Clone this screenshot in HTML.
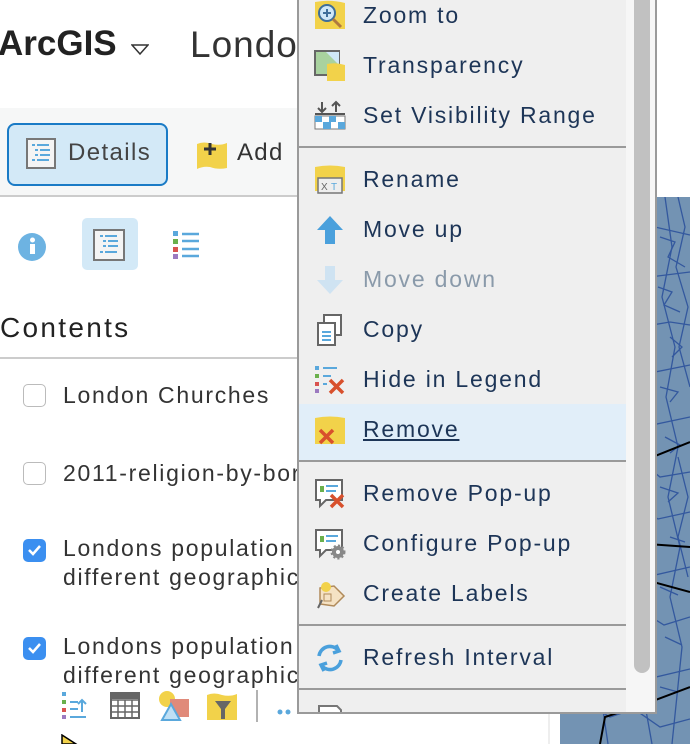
<!DOCTYPE html>
<html><head><meta charset="utf-8"><style>
*{margin:0;padding:0;box-sizing:border-box}
body{width:690px;height:744px;overflow:hidden;background:#fff;font-family:"Liberation Sans",sans-serif;position:relative;color:#333}
.abs{position:absolute}
.mi{position:absolute;left:363px;font-size:23px;color:#1d3557;white-space:nowrap;letter-spacing:1.8px}
.ic{position:absolute;left:314px;width:32px;height:32px}
.sep{position:absolute;left:299px;width:327px;height:2px;background:#9a9a9a}
.cb{position:absolute;left:23px;width:23px;height:23px;border:1.5px solid #bbb;border-radius:5px;background:#fff}
.cb.on{background:#3b8ff0;border-color:#3b8ff0}
.lt{position:absolute;left:63px;font-size:23px;color:#333;white-space:nowrap;line-height:29px;letter-spacing:1.7px}
</style></head><body>
<!-- header -->
<div class="abs" style="left:-2px;top:24px;font-size:35px;color:#222;font-weight:bold;letter-spacing:0px">ArcGIS</div>
<svg class="abs" style="left:131px;top:44px" width="18" height="12"><path d="M1 1 L17 1 L9 10 Z" fill="none" stroke="#333" stroke-width="1.5"/></svg>
<div class="abs" style="left:190px;top:24px;font-size:37px;color:#333;letter-spacing:1px">London</div>
<!-- toolbar -->
<div class="abs" style="left:0;top:108px;width:560px;height:89px;background:#f6f7f7;border-bottom:2px solid #ccc"></div>
<div class="abs" style="left:7px;top:123px;width:161px;height:63px;background:#d3e9f7;border:2px solid #1a7bc6;border-radius:8px"></div>
<svg class="abs" style="left:26px;top:138px" width="30" height="32"><rect x="1" y="1" width="28" height="29" fill="#f4f4f4" stroke="#777" stroke-width="2"/><g stroke="#5aa8dc" stroke-width="2"><path d="M6 7h3M11 7h12M9 12h3M14 12h10M9 17h3M14 17h10M6 22h3M11 22h12"/></g></svg>
<div class="abs" style="left:68px;top:139px;font-size:24px;color:#444;letter-spacing:1.4px">Details</div>
<svg class="abs" style="left:196px;top:140px" width="32" height="30"><path d="M1 4 Q8 1 16 4 Q24 6 31 3 L31 28 Q22 30 14 27 Q7 26 1 29Z" fill="#f2d24a"/><path d="M14 3v12M8 9h12" stroke="#333" stroke-width="3"/></svg>
<div class="abs" style="left:237px;top:139px;font-size:24px;color:#333;letter-spacing:1.3px">Add</div>
<!-- icon row -->
<svg class="abs" style="left:16px;top:232px" width="32" height="30"><circle cx="16" cy="15" r="14" fill="#6db3e2"/><rect x="14" y="12" width="5" height="10" fill="#fff"/><circle cx="16.5" cy="8" r="2.5" fill="#fff"/></svg>
<div class="abs" style="left:82px;top:218px;width:56px;height:52px;background:#d3e9f7;border-radius:5px"></div>
<svg class="abs" style="left:93px;top:229px" width="32" height="32"><rect x="1" y="1" width="30" height="30" fill="#f4f4f4" stroke="#777" stroke-width="2"/><g stroke="#5aa8dc" stroke-width="2"><path d="M7 7h3M12 7h12M10 12h3M15 12h10M10 17h3M15 17h10M7 23h3M12 23h12"/></g></svg>
<svg class="abs" style="left:172px;top:230px" width="30" height="30"><rect x="1" y="1" width="5" height="5" fill="#5aa8dc"/><rect x="1" y="9" width="5" height="5" fill="#6ab04c"/><rect x="1" y="17" width="5" height="5" fill="#d9534f"/><rect x="1" y="24" width="5" height="5" fill="#9c7ac0"/><g stroke="#5aa8dc" stroke-width="2.5"><path d="M10 4h17M10 11h17M10 19h17M10 26h17"/></g></svg>
<div class="abs" style="left:0;top:312px;font-size:28px;color:#222;letter-spacing:2.3px">Contents</div>
<div class="abs" style="left:0;top:357px;width:298px;height:2px;background:#ccc"></div>
<div class="abs" style="left:548px;top:197px;width:2px;height:547px;background:#eee"></div>
<!-- list -->
<div class="cb" style="top:384px"></div><div class="lt" style="top:381px">London Churches</div>
<div class="cb" style="top:462px"></div><div class="lt" style="top:459px">2011-religion-by-borough</div>
<div class="cb on" style="top:539px"><svg width="20" height="20" style="position:absolute;left:0;top:0"><path d="M5 10l4 4 7-8" stroke="#fff" stroke-width="2.5" fill="none"/></svg></div>
<div class="lt" style="top:534px">Londons population<br>different geographic</div>
<div class="cb on" style="top:637px"><svg width="20" height="20" style="position:absolute;left:0;top:0"><path d="M5 10l4 4 7-8" stroke="#fff" stroke-width="2.5" fill="none"/></svg></div>
<div class="lt" style="top:632px">Londons population<br>different geographic</div>
<svg class="abs" style="left:60px;top:690px" width="240" height="32">
<g><rect x="2" y="2" width="4" height="4" fill="#5aa8dc"/><rect x="2" y="10" width="4" height="4" fill="#6ab04c"/><rect x="2" y="18" width="4" height="4" fill="#d9534f"/><rect x="2" y="25" width="4" height="4" fill="#9c7ac0"/><path d="M10 12h8M10 19h8M10 27h16M22 22v-12M18 14l4-4 4 4" stroke="#5aa8dc" stroke-width="2" fill="none"/></g>
<g transform="translate(50,2)"><rect x="1" y="1" width="28" height="25" fill="#fff" stroke="#666" stroke-width="2"/><path d="M1 8h28M1 14h28M1 20h28M8 8v18M15 8v18M22 8v18" stroke="#666" stroke-width="1.5"/><rect x="1" y="1" width="28" height="6" fill="#666"/></g>
<g transform="translate(98,0)"><circle cx="9" cy="9" r="8" fill="#f2d24a"/><rect x="12" y="9" width="19" height="18" fill="#e08a7a"/><path d="M4 30 L13 14 L22 30Z" fill="#bfe0f5" stroke="#5aa8dc" stroke-width="2"/></g>
<g transform="translate(146,2)"><path d="M1 3 Q8 0 16 3 Q24 5 31 2 L31 28 L1 28Z" fill="#f2d24a"/><path d="M9 9h16l-6 8v10h-4v-10Z" fill="#666"/></g>
<path d="M197 0v32" stroke="#999" stroke-width="1.5"/>
<circle cx="220" cy="22" r="2.5" fill="#5aa8dc"/><circle cx="228" cy="22" r="2.5" fill="#5aa8dc"/>
</svg>
<svg class="abs" style="left:60px;top:734px" width="20" height="10"><path d="M2 1 L16 10 L2 10Z" fill="#f2d24a" stroke="#000" stroke-width="1.5"/></svg>
<!-- map -->
<svg class="abs" style="left:560px;top:197px" width="130" height="547">
<rect width="130" height="547" fill="#7393b3"/>
<g stroke="#33589e" stroke-width="1.3" fill="none">
<path d="M0 20 L20 15 L30 28 L55 22 L70 40 L95 30 L130 38"/><path d="M10 60 L30 55 L45 70 L70 65 L90 80 L130 75"/>
<path d="M0 110 L25 105 L40 118 L62 112 L80 130 L110 125 L130 128"/><path d="M5 160 L28 150 L50 165 L75 158 L95 175 L130 168"/>
<path d="M0 210 L22 205 L44 220 L68 212 L92 228 L130 220"/><path d="M0 260 L30 255 L50 270 L78 262 L100 280 L130 275"/>
<path d="M0 310 L25 300 L48 318 L72 308 L98 322 L130 315"/><path d="M0 360 L20 352 L45 368 L70 360 L95 378 L130 370"/>
<path d="M0 410 L28 404 L52 418 L75 410 L104 428 L130 420"/><path d="M0 460 L22 455 L48 470 L70 462 L96 480 L130 472"/>
<path d="M0 510 L24 505 L50 520 L74 512 L100 530 L130 522"/>
<path d="M100 40 L115 45 L108 60 L125 70 M98 90 L112 95 L104 108 L120 115 M110 140 L122 150 L112 160 M100 190 L118 195 L110 205 M105 240 L120 248 L110 256 M100 290 L118 296 L108 305 M110 340 L125 345 M100 390 L118 398 M105 440 L122 448 M100 490 L118 495"/>
<path d="M30 0 L35 40 L28 80 L38 120 L30 160 L40 200 L32 240 L42 280 L34 320 L44 360 L36 400 L46 440 L38 480 L48 547"/>
<path d="M70 0 L78 40 L68 80 L80 120 L72 160 L84 200 L74 240 L86 280 L76 320 L88 360 L78 400 L90 440 L80 480 L92 547"/>
<path d="M105 0 L112 50 L102 100 L115 150 L106 200 L118 250 L108 300 L120 350 L110 400 L122 450 L112 547"/>
<path d="M118 0 L125 30 L116 70 L128 110 L119 150 L130 190 M118 260 L128 300 L118 340 L128 380"/>
</g>
<g stroke="#000" stroke-width="2" fill="none"><path d="M0 190 L10 230 L25 250 L35 280 L80 265 L130 245"/><path d="M0 330 L30 320 L60 345 L130 350"/><path d="M0 440 L35 420 L75 380 L130 395"/><path d="M40 547 L45 520 L90 505 L130 490"/></g>
</svg>
<!-- menu -->
<div class="abs" style="left:297px;top:0;width:360px;height:714px;background:#efefef;border-left:2px solid #9a9a9a;border-right:2px solid #9a9a9a;border-bottom:2px solid #9a9a9a"></div>
<div class="abs" style="left:626px;top:0;width:29px;height:712px;background:#f6f6f6"></div>
<div class="abs" style="left:634px;top:-8px;width:16px;height:681px;background:#c1c1c1;border-radius:8px"></div>
<div class="abs" style="left:299px;top:404px;width:327px;height:56px;background:#e1eef9"></div>
<div class="sep" style="top:146px"></div><div class="sep" style="top:460px"></div><div class="sep" style="top:624px"></div><div class="sep" style="top:688px"></div>
<div class="mi" style="top:2px">Zoom to</div>
<div class="mi" style="top:52px">Transparency</div>
<div class="mi" style="top:102px">Set Visibility Range</div>
<div class="mi" style="top:166px">Rename</div>
<div class="mi" style="top:216px">Move up</div>
<div class="mi" style="top:266px;color:#8a9aaa">Move down</div>
<div class="mi" style="top:316px">Copy</div>
<div class="mi" style="top:366px">Hide in Legend</div>
<div class="mi" style="top:416px;text-decoration:underline">Remove</div>
<div class="mi" style="top:480px">Remove Pop-up</div>
<div class="mi" style="top:530px">Configure Pop-up</div>
<div class="mi" style="top:580px">Create Labels</div>
<div class="mi" style="top:644px">Refresh Interval</div>
<!-- menu icons -->
<svg class="ic" style="top:0"><path d="M1 2 Q16 -1 31 3 L31 29 L1 29Z" fill="#f2d24a"/><circle cx="13" cy="13" r="8" fill="#cfe7f7" stroke="#3f6f9a" stroke-width="2"/><path d="M13 9v8M9 13h8" stroke="#3f6f9a" stroke-width="2"/><path d="M19 19l8 8" stroke="#b07a40" stroke-width="3"/></svg>
<svg class="ic" style="top:50px"><rect x="1" y="1" width="24" height="24" fill="#a9d29f" stroke="#666" stroke-width="2"/><path d="M12 2h13v13" fill="#cfe7f7"/><path d="M13 14 Q22 12 31 15 L31 31 L13 31Z" fill="#f2d24a"/></svg>
<svg class="ic" style="top:100px"><path d="M8 2v10M4 8l4 4 4-4M22 12v-10M18 6l4-4 4 4" stroke="#555" stroke-width="2" fill="none"/><path d="M1 14h30" stroke="#555" stroke-width="2"/><rect x="1" y="16" width="30" height="13" fill="#fff" stroke="#777"/><path d="M1 16h7v6h7v-6h7v6h9v7h-7v-7h-7v7h-8v-7h-8z" fill="#5aa8dc"/></svg>
<svg class="ic" style="top:164px"><path d="M1 3 Q16 0 31 3 L31 27 L1 27Z" fill="#f2d24a"/><rect x="4" y="14" width="24" height="15" fill="#eee" stroke="#777" stroke-width="1.5"/><text x="7" y="26" font-size="10" fill="#666" font-family="Liberation Sans">X</text><text x="17" y="26" font-size="10" fill="#5aa8dc" font-family="Liberation Sans">T</text></svg>
<svg class="ic" style="top:214px"><path d="M16 2 L3 16 h8 v14 h10 v-14 h8Z" fill="#4aa0dc"/></svg>
<svg class="ic" style="top:264px"><path d="M16 30 L3 16 h8 v-14 h10 v14 h8Z" fill="#cfe3f2"/></svg>
<svg class="ic" style="top:314px"><rect x="10" y="1" width="17" height="20" fill="#fff" stroke="#666" stroke-width="2"/><rect x="4" y="9" width="17" height="22" fill="#fff" stroke="#666" stroke-width="2"/><path d="M8 18h9M8 22h9M8 26h9" stroke="#5aa8dc" stroke-width="2"/></svg>
<svg class="ic" style="top:364px"><rect x="1" y="2" width="4" height="4" fill="#5aa8dc"/><rect x="1" y="10" width="4" height="4" fill="#6ab04c"/><rect x="1" y="18" width="4" height="4" fill="#d9534f"/><rect x="1" y="25" width="4" height="4" fill="#9c7ac0"/><path d="M9 4h14M9 12h8M9 20h4" stroke="#5aa8dc" stroke-width="2"/><path d="M16 16l13 13M29 16l-13 13" stroke="#d8502c" stroke-width="3.5"/></svg>
<svg class="ic" style="top:414px"><path d="M1 4 Q16 1 31 4 L31 30 L1 30Z" fill="#f2d24a"/><path d="M6 16l13 13M19 16l-13 13" stroke="#d8502c" stroke-width="3.5"/></svg>
<svg class="ic" style="top:478px"><path d="M2 2h26v20h-16l-6 6v-6h-4z" fill="#fff" stroke="#666" stroke-width="2"/><rect x="6" y="8" width="4" height="6" fill="#6ab04c"/><path d="M12 8h12M12 13h10" stroke="#5aa8dc" stroke-width="2"/><path d="M17 17l12 12M29 17l-12 12" stroke="#d8502c" stroke-width="3.5"/></svg>
<svg class="ic" style="top:528px"><path d="M2 2h26v20h-16l-6 6v-6h-4z" fill="#fff" stroke="#666" stroke-width="2"/><rect x="6" y="8" width="4" height="6" fill="#6ab04c"/><path d="M12 8h12M12 13h10" stroke="#5aa8dc" stroke-width="2"/><circle cx="24" cy="24" r="6" fill="#888" stroke="#888" stroke-width="3" stroke-dasharray="2 2"/><circle cx="24" cy="24" r="2" fill="#fff"/></svg>
<svg class="ic" style="top:578px"><path d="M6 10 L20 8 L30 18 L20 28 L6 26Z" fill="#f5e2c4" stroke="#b08a5a" stroke-width="1.5"/><circle cx="12" cy="9" r="5" fill="#f2d24a"/><rect x="10" y="16" width="7" height="7" fill="none" stroke="#b08a5a"/><path d="M8 22 L4 30" stroke="#666" stroke-width="2"/></svg>
<svg class="ic" style="top:642px"><path d="M5 14 A11 11 0 0 1 24 8 M22 3 L25 9 L19 11" stroke="#4aa0dc" stroke-width="3.5" fill="none"/><path d="M27 18 A11 11 0 0 1 8 24 M10 29 L7 23 L13 21" stroke="#4aa0dc" stroke-width="3.5" fill="none"/></svg>
<svg class="abs" style="left:318px;top:704px" width="30" height="8"><path d="M1 8v-6h18l4 4v2" stroke="#777" stroke-width="2" fill="#fff"/></svg>
</body></html>
